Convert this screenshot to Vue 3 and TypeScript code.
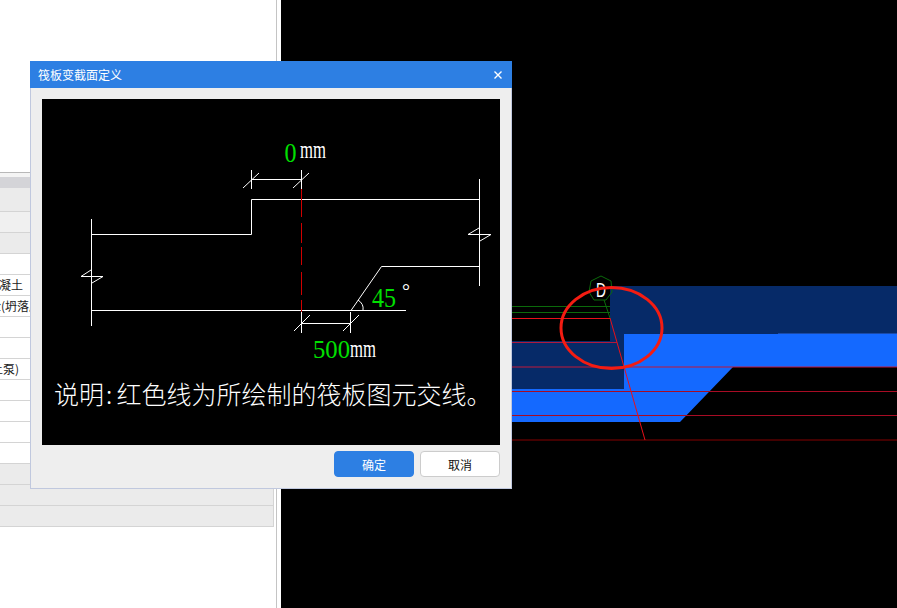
<script setup lang="ts">
// property rows in the panel behind the dialog
const rows = [
  { tone: 'grey', text: '' },
  { tone: 'pale', text: '' },
  { tone: 'grey', text: '' },
  { tone: '', text: '' },
  { tone: '', text: '商品混凝土' },
  { tone: 'shift', text: '预拌砼(坍落度180-220)' },
  { tone: '', text: '' },
  { tone: '', text: '' },
  { tone: '', text: '(混凝土泵)' },
  { tone: '', text: '' },
  { tone: '', text: '' },
  { tone: '', text: '' },
  { tone: '', text: '' },
  { tone: 'grey', text: '' },
  { tone: 'grey', text: '' },
  { tone: 'grey', text: '' }
]

const sceneLines = [
  { x1: 281, y1: 306.5, x2: 610, y2: 306.5, c: '#0b6a0b' },
  { x1: 281, y1: 312.5, x2: 610, y2: 312.5, c: '#0b6a0b' },
  { x1: 281, y1: 318.5, x2: 610, y2: 318.5, c: '#e8101a' },
  { x1: 281, y1: 342.5, x2: 617, y2: 342.5, c: '#b0193c' },
  { x1: 778, y1: 333.5, x2: 897, y2: 333.5, c: '#1a4aa8' },
  { x1: 281, y1: 367, x2: 897, y2: 367, c: '#c0183a' },
  { x1: 281, y1: 391.5, x2: 897, y2: 391.5, c: '#a80c24' },
  { x1: 281, y1: 415.5, x2: 897, y2: 415.5, c: '#a80c24' },
  { x1: 281, y1: 440, x2: 897, y2: 440, c: '#850000' },
  { x1: 610, y1: 318, x2: 645, y2: 440, c: '#e8101a' },
  { x1: 604, y1: 300, x2: 610, y2: 318, c: '#0b6a0b' }
]
</script>

<template>
  <div class="page">
    <aside class="side">
      <div class="table">
        <div class="table-top"></div>
        <div class="table-band"></div>
        <div v-for="(row, i) in rows" :key="i" class="row" :class="[row.tone, { first: i === 0 }]">
          <span class="cell-text">{{ row.text }}</span>
        </div>
      </div>
    </aside>

    <main class="viewport">
      <svg class="scene" viewBox="281 0 616 608" width="616" height="608">
        <polygon points="610,286 897,286 897,334 624,334 624,389 281,389 281,341 610,341" fill="#062a68" />
        <polygon points="624,334 897,334 897,367 733,367 680,422 281,422 281,389 624,389" fill="#1469ff" />
        <line
          v-for="(l, i) in sceneLines"
          :key="i"
          :x1="l.x1"
          :y1="l.y1"
          :x2="l.x2"
          :y2="l.y2"
          :stroke="l.c"
          stroke-width="1"
        />
        <polygon
          points="601,276 611,281 612,292 606,300 594,300 589,292 591,281"
          fill="none"
          stroke="#0b6a0b"
          stroke-width="1"
        />
        <text x="596" y="297" class="axis-label" textLength="10" lengthAdjust="spacingAndGlyphs">D</text>
        <ellipse cx="611.5" cy="328" rx="50.5" ry="40.5" fill="none" stroke="#f41c12" stroke-width="3" />
      </svg>
    </main>

    <section class="dialog">
      <header class="dialog-title">
        <span>筏板变截面定义</span>
        <svg class="close" width="8" height="8" viewBox="0 0 8 8">
          <path d="M0.5 0.5 L7.5 7.5 M7.5 0.5 L0.5 7.5" stroke="#fff" stroke-width="1.4" fill="none" />
        </svg>
      </header>
      <div class="dialog-body">
        <svg class="drawing" viewBox="42 99 458 346" width="458" height="346">
          <g stroke="#fff" stroke-width="1" fill="none">
            <path d="M91.5 219 V326" />
            <path d="M91.5 234.5 H251.5 V199.5 H479.5" />
            <path d="M479.5 179 V286" />
            <path d="M479.5 266.5 H381.5 L351 310.5" />
            <path d="M91.5 310.5 H406" />
            <path d="M358 300 Q364 304 363 310" />
            <path d="M91 270 L81 276.5 H103 L92 283" />
            <path d="M479 228 L468 234.5 H491 L480 241" />
            <path d="M251.5 170 V189 M301.5 170 V189 M251.5 179.5 H301.5" />
            <path d="M243 188 L259 173 M293 188 L309 173" />
            <path d="M301.5 312 V333 M350.5 312 V333 M301.5 323.5 H350.5" />
            <path d="M294 331 L310 315 M343 331 L359 315" />
          </g>
          <path
            d="M301.5 189 V217 M301.5 223 V243 M301.5 247 V265 M301.5 272 V295 M301.5 300 V312"
            stroke="#d00000"
            stroke-width="1"
            fill="none"
          />
          <text x="284.5" y="162" class="num" font-size="27" textLength="12" lengthAdjust="spacingAndGlyphs">0</text>
          <text x="300" y="158" class="unit" font-size="26" textLength="26" lengthAdjust="spacingAndGlyphs">mm</text>
          <text x="372" y="307" class="num" font-size="27" textLength="24" lengthAdjust="spacingAndGlyphs">45</text>
          <text x="402" y="298" class="unit" font-size="20">°</text>
          <text x="313" y="358" class="num" font-size="25" textLength="37" lengthAdjust="spacingAndGlyphs">500</text>
          <text x="350" y="357" class="unit" font-size="26" textLength="26" lengthAdjust="spacingAndGlyphs">mm</text>
          <text y="404" class="note">
            <tspan x="54">说明</tspan>
            <tspan x="106">:</tspan>
            <tspan x="116.5">红色线为所绘制的筏板图元交线。</tspan>
          </text>
        </svg>
        <footer class="dialog-actions">
          <button type="button" class="btn primary">确定</button>
          <button type="button" class="btn">取消</button>
        </footer>
      </div>
    </section>
  </div>
</template>

<style>
html,
body {
  margin: 0;
  padding: 0;
  background: #000;
}
</style>

<style scoped>
.page {
  position: relative;
  display: flex;
  width: 897px;
  height: 608px;
  overflow: hidden;
  background: #000;
  font-family: "Noto Sans CJK SC", "Liberation Sans", sans-serif;
  font-size: 12px;
}

.side {
  flex: 0 0 281px;
  box-sizing: border-box;
  padding-top: 172px;
  background: #fff;
  position: relative;
}

.side::after {
  content: "";
  position: absolute;
  top: 0;
  bottom: 0;
  left: 276px;
  width: 1px;
  background: #c4c4c4;
}

.table {
  width: 274px;
  overflow: hidden;
  box-sizing: border-box;
  border-right: 1px solid #d4d4d4;
}

.table-top {
  height: 5px;
  box-sizing: border-box;
  border-top: 1px solid #b8b8b8;
  background: #f4f4f4;
}

.table-band {
  height: 11px;
  background: #d4d4d8;
}

.row {
  height: 21px;
  box-sizing: border-box;
  border-bottom: 1px solid #d4d4d4;
  line-height: 20px;
  color: #222;
  white-space: nowrap;
}

.row.first {
  height: 24px;
}

.row.grey {
  background: #ebebeb;
}

.row.pale {
  background: #f0f0f0;
}

.cell-text {
  display: block;
  margin-left: -37px;
}

.row.shift .cell-text {
  margin-left: -35px;
}

.viewport {
  flex: 1;
  min-width: 0;
}

.scene {
  display: block;
}

.axis-label {
  fill: #fff;
  font-family: "Liberation Sans", sans-serif;
  font-size: 20px;
}

.dialog {
  position: absolute;
  left: 30px;
  top: 61px;
  width: 482px;
  height: 428px;
  box-sizing: border-box;
  border: 1px solid #c0c8de;
  border-top: 0;
  background: #eee;
}

.dialog-title {
  display: flex;
  align-items: center;
  justify-content: space-between;
  height: 27px;
  margin: 0 -1px;
  padding: 0 10px 0 8px;
  background: #2d7fe3;
  color: #fff;
}

.close {
  display: block;
}

.dialog-body {
  padding: 11px 11px 0;
}

.drawing {
  display: block;
  background: #000;
}

.num {
  fill: #00e000;
  font-family: "Liberation Serif", serif;
}

.unit {
  fill: #fff;
  font-family: "Liberation Serif", serif;
}

.note {
  fill: #fff;
  font-family: "Noto Sans CJK SC", serif;
  font-size: 25px;
  font-weight: 300;
}

.dialog-actions {
  display: flex;
  justify-content: flex-end;
  gap: 6px;
  margin-top: 6px;
}

.btn {
  width: 80px;
  height: 26px;
  padding: 0;
  box-sizing: border-box;
  border: 1px solid #ccc;
  border-radius: 4px;
  background: #fff;
  color: #111;
  font: inherit;
}

.btn.primary {
  border-color: #2d7fe3;
  background: #2d7fe3;
  color: #fff;
}
</style>
